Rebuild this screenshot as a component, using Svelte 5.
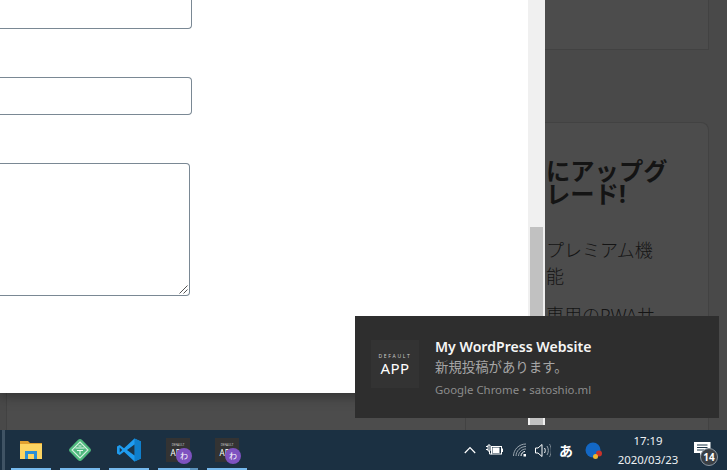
<script>
    const tasks = [
        { id: 'folder' },
        { id: 'diamond' },
        { id: 'code' },
        { id: 'app', stacked: true },
        { id: 'app' }
    ]
    const perks = ['プレミアム機能', '専用のPWAサポート']
</script>

<div class="screen">
    <div class="desktop">
        <div class="page">
            <div class="main-card"></div>
            <div class="side">
                <div class="card top-card"></div>
                <div class="card promo">
                    <h2>にアップグレード!</h2>
                    {#each perks as perk}
                        <p>{perk}</p>
                    {/each}
                </div>
            </div>
        </div>

        <div class="modal">
            <div class="sheet">
                <div class="field first"></div>
                <div class="field second"></div>
                <div class="field area">
                    <svg class="grip" width="9" height="9" viewBox="0 0 9 9">
                        <path d="M0.5 8.5L8.5 0.5M4.5 8.5L8.5 4.5" stroke="#555" fill="none" />
                    </svg>
                </div>
            </div>
            <div class="scroll"><div class="thumb"></div></div>
        </div>

        <div class="toast">
            <div class="toast-icon">
                <span class="small">DEFAULT</span>
                <span class="big">APP</span>
            </div>
            <div class="toast-text">
                <div class="title">My WordPress Website</div>
                <div class="body">新規投稿があります。</div>
                <div class="source">Google Chrome • satoshio.ml</div>
            </div>
        </div>
    </div>

    <div class="taskbar">
        <div class="start"></div>
        <div class="apps">
            {#each tasks as task}
                <div class="task">
                    {#if task.id === 'folder'}
                        <svg width="22" height="18" viewBox="0 0 22 18">
                            <path d="M0 0h8l2 2h12v6H0z" fill="#e0a030" />
                            <path d="M0 3h22v15H0z" fill="#fcd462" />
                            <path d="M5 10h12v8h-3v-5H8v5H5z" fill="#2a8fd8" />
                        </svg>
                    {:else if task.id === 'diamond'}
                        <svg width="26" height="26" viewBox="0 0 26 26">
                            <rect x="4.500" y="4.500" width="17" height="17" rx="3" transform="rotate(45 13 13)" fill="#4fb97e" />
                            <path d="M13 5L21 13L13 21L5 13Z" fill="none" stroke="#d5f0e0" stroke-width="1.100" />
                            <path d="M8.500 11h9M10 13.500h6M13 13.500v4M11.500 9h3" stroke="#e6f7ed" stroke-width="1.100" fill="none" />
                        </svg>
                    {:else if task.id === 'code'}
                        <svg width="24" height="24" viewBox="0 0 24 24">
                            <path d="M17.500 0.500L24 3.500V20.500L17.500 23.500L7 13.700L2.700 17L0 15.500V8.500L2.700 7L7 10.300Z" fill="#1f9cf0" />
                            <path d="M17.500 0.500V23.500L24 20.500V3.500Z" fill="#0f7fcc" />
                            <path d="M17.500 6.500L10 12L17.500 17.500Z" fill="#1b3447" />
                            <path d="M2.700 9.500L5.200 12L2.700 14.500Z" fill="#1b3447" />
                        </svg>
                    {:else}
                        <div class="app-tile">
                            <span class="tile-small">DEFAULT</span>
                            <span class="tile-big">APP</span>
                            <span class="app-badge">わ</span>
                        </div>
                    {/if}
                    <div class="underline" class:stacked={task.stacked}></div>
                </div>
            {/each}
        </div>

        <div class="tray">
            <svg class="t-chev" width="12" height="8" viewBox="0 0 12 8">
                <path d="M0.800 7L6 1.500L11.200 7" fill="none" stroke="#fff" stroke-width="1.200" />
            </svg>
            <svg class="t-batt" width="17" height="12" viewBox="0 0 17 12">
                <path d="M0 2.500h2M0 5.500h2M2 1v6h2V1zM3.500 7v3h2" stroke="#fff" fill="none" />
                <rect x="5.500" y="2.500" width="10" height="7.500" fill="none" stroke="#fff" />
                <rect x="6.500" y="3.500" width="7" height="5.500" fill="#fff" />
                <rect x="16" y="4.500" width="1" height="3.500" fill="#fff" />
            </svg>
            <svg class="t-wifi" width="14" height="14" viewBox="0 0 14 14">
                <path d="M0.500 13C0.500 6.500 6 1 13 1M3 13C3 8 7.500 3.500 13 3.500M5.500 13C5.500 9.500 9 6 13 6" fill="none" stroke="#9aa5ae" stroke-width="1" />
                <path d="M8 13C8 10.800 10 8.500 12 8.500" fill="none" stroke="#fff" stroke-width="1" />
                <rect x="10.500" y="11" width="2.500" height="2.500" fill="#fff" />
            </svg>
            <svg class="t-vol" width="16" height="15" viewBox="0 0 16 15">
                <path d="M0.500 5h2.500L7 1.500v12L3 10H0.500z" fill="none" stroke="#fff" />
                <path d="M9.500 5c1 1.500 1 3.500 0 5" fill="none" stroke="#fff" />
                <path d="M12 3c1.800 2.800 1.800 6.200 0 9" fill="none" stroke="#9aa5ae" />
                <path d="M14.500 1c2.300 4 2.300 9 0 13" fill="none" stroke="#7d8993" />
            </svg>
            <span class="ime">あ</span>
            <svg class="t-ball" width="18" height="18" viewBox="0 0 18 18">
                <circle cx="8" cy="8" r="7.500" fill="#1367c4" />
                <circle cx="14" cy="11.500" r="3" fill="#c8332b" />
                <circle cx="10.500" cy="14.500" r="2.500" fill="#f0b52c" />
            </svg>
            <div class="clock">
                <span>17:19</span>
                <span>2020/03/23</span>
            </div>
            <div class="notify">
                <svg width="17" height="14" viewBox="0 0 17 14">
                    <path d="M0 0h16.500v11H9L6 14V11H0z" fill="#fff" />
                    <path d="M3 3h10.500M3 5.500h10.500M3 8h7" stroke="#1b3447" fill="none" />
                </svg>
                <span class="count">14</span>
            </div>
        </div>
    </div>
</div>

<style>
    :global(body) {
        margin: 0;
        background: #4a4a4a;
    }

    .screen {
        width: 727px;
        height: 470px;
        display: flex;
        flex-direction: column;
        overflow: hidden;
        font-family: 'Noto Sans', 'Noto Sans CJK JP', sans-serif;
    }

    .desktop {
        position: relative;
        height: 430px;
        overflow: hidden;
    }

    .page {
        height: 100%;
        display: flex;
        padding-left: 6px;
        background: #494949;
    }

    .main-card {
        flex: 1;
        background: #4c4c4c;
        border-left: 1px solid #424242;
    }

    .side {
        width: 244px;
        margin-right: 18px;
        display: flex;
        flex-direction: column;
        gap: 72px;
    }

    .card {
        background: #4c4c4c;
        border: 1px solid #424242;
    }

    .top-card {
        height: 50px;
        flex: none;
        border-top: none;
        box-sizing: border-box;
    }

    .promo {
        flex: 1;
        border-bottom: none;
        border-radius: 8px 8px 0 0;
        padding: 36px 0 0 80px;
        color: #141414;
    }

    .promo h2 {
        width: 124px;
        margin: 0 0 32px;
        font-size: 24.300px;
        line-height: 23px;
        font-weight: 700;
    }

    .promo p {
        width: 124px;
        margin: 0 0 13px;
        font-size: 18px;
        line-height: 26px;
        font-weight: 300;
    }

    .modal {
        position: absolute;
        left: 0;
        top: 0;
        display: flex;
        align-items: flex-start;
    }

    .sheet {
        width: 528px;
        height: 393px;
        box-sizing: border-box;
        background: #fff;
        display: flex;
        flex-direction: column;
        box-shadow: 0 3px 12px rgba(0, 0, 0, 0.35);
    }

    .field {
        box-sizing: border-box;
        background: #fff;
        border: 1px solid #7a8894;
        border-left: none;
        border-radius: 0 4px 4px 0;
    }

    .first {
        width: 192px;
        height: 29px;
        border-top: none;
        border-top-right-radius: 0;
    }

    .second {
        width: 192px;
        height: 38px;
        margin-top: 48px;
    }

    .area {
        position: relative;
        width: 190px;
        height: 133px;
        margin-top: 48px;
    }

    .grip {
        position: absolute;
        right: 1px;
        bottom: 1px;
    }

    .scroll {
        position: relative;
        width: 17px;
        height: 425px;
        background: #f0f0f0;
    }

    .thumb {
        width: 13px;
        height: 198px;
        margin: 227px 0 0 2px;
        background: #c1c1c1;
    }

    .toast {
        position: absolute;
        left: 355px;
        top: 316px;
        width: 364px;
        height: 102px;
        box-sizing: border-box;
        padding: 24px 16px;
        display: flex;
        gap: 16px;
        background: #2e2e2e;
        color: #fff;
    }

    .toast-icon {
        width: 48px;
        height: 48px;
        flex: none;
        background: #333;
        display: flex;
        flex-direction: column;
        align-items: center;
        justify-content: center;
    }

    .small {
        font-size: 5px;
        line-height: 8px;
        letter-spacing: 1.700px;
        color: #ccc;
    }

    .big {
        font-size: 15px;
        line-height: 16px;
        letter-spacing: 0.4px;
    }

    .toast-text {
        margin-top: -2px;
        min-width: 0;
    }

    .title {
        font-size: 14.100px;
        line-height: 18px;
        font-weight: 600;
        color: #f6f6f6;
    }

    .body {
        font-size: 13.400px;
        line-height: 22px;
        color: #a6a6a6;
    }

    .source {
        margin-top: 2px;
        font-size: 11.400px;
        line-height: 20px;
        color: #8c8c8c;
    }

    .taskbar {
        height: 40px;
        display: flex;
        background: #1b3042;
        color: #fff;
    }

    .start {
        width: 3px;
        margin-left: 2px;
        background: #3f5364;
    }

    .apps {
        display: flex;
        gap: 9px;
        margin-left: 6px;
    }

    .task {
        position: relative;
        width: 40px;
        display: flex;
        align-items: center;
        justify-content: center;
    }

    .underline {
        position: absolute;
        left: 0;
        right: 0;
        bottom: 0;
        height: 2px;
        background: #76b9ed;
    }

    .underline.stacked {
        background: linear-gradient(to right, #76b9ed 32px, #5d93bd 32px);
    }

    .app-tile {
        position: relative;
        width: 24px;
        height: 24px;
        background: #333;
        display: flex;
        flex-direction: column;
        align-items: center;
        justify-content: center;
    }

    .tile-small {
        font-size: 3px;
        line-height: 5px;
        color: #ccc;
    }

    .tile-big {
        font-size: 8px;
        line-height: 9px;
    }

    .app-badge {
        position: absolute;
        left: 10px;
        top: 10px;
        width: 16px;
        height: 16px;
        border-radius: 50%;
        background: #7e52c0;
        font-size: 8px;
        line-height: 16px;
        text-align: center;
    }

    .tray {
        flex: 1;
        display: flex;
        align-items: center;
        position: relative;
    }

    .t-chev {
        margin-left: 217px;
    }

    .t-batt {
        margin-left: 10px;
    }

    .t-wifi {
        margin-left: 10px;
    }

    .t-vol {
        margin-left: 8px;
    }

    .ime {
        margin-left: 7px;
        width: 16px;
        font-size: 14px;
        font-weight: 700;
        text-align: center;
    }

    .t-ball {
        margin-left: 11px;
        margin-top: 1px;
    }

    .clock {
        width: 70px;
        margin-left: 10px;
        display: flex;
        flex-direction: column;
        align-items: center;
        font-size: 11.400px;
        line-height: 19px;
        color: #eef1f3;
    }

    .notify {
        position: relative;
        margin-left: 11px;
        margin-top: -2px;
        display: flex;
    }

    .count {
        position: absolute;
        left: 6px;
        top: 6px;
        width: 18px;
        height: 18px;
        box-sizing: border-box;
        border-radius: 50%;
        border: 1px solid #8a96a0;
        background: #3a3f45;
        font-size: 10px;
        font-weight: 700;
        line-height: 16px;
        text-align: center;
    }
</style>
